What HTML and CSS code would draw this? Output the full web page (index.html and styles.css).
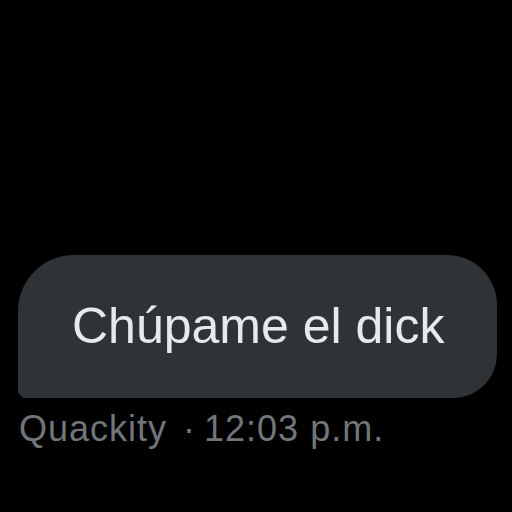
FILE: index.html
```html
<!DOCTYPE html>
<html lang="en">
<head>
  <meta charset="UTF-8">
  <meta name="viewport" content="width=device-width, initial-scale=1.0">
  <title>Message</title>
  <link rel="stylesheet" href="styles.css">
</head>
<body>
  <div class="conversation">
    <div class="message">
      <div class="bubble">Chúpame el dick</div>
      <div class="meta">Quackity <span class="dot">·</span>12:03 p.m.</div>
    </div>
  </div>
</body>
</html>
```

FILE: styles.css
```css
body {
  margin: 0;
  padding: 0;
  background: #000000;
  font-family: "Liberation Sans", Arial, sans-serif;
  height: 512px;
  overflow: hidden;
}

.conversation {
  padding: 255px 17px 0 18px;
}

.message {
  display: flex;
  flex-direction: column;
  align-items: flex-start;
}

.bubble {
  background: #2f3336;
  color: #e7e9ea;
  font-size: 50px;
  line-height: 60px;
  white-space: nowrap;
  padding: 41px 53px 42px 54px;
  border-radius: 56px 50px 44px 8px;
}

.meta {
  margin-top: 11px;
  color: #71767b;
  font-size: 36px;
  line-height: 40px;
  letter-spacing: 1px;
  white-space: nowrap;
  padding-left: 1px;
}

.dot {
  margin-left: 5px;
  margin-right: 8px;
}
```
